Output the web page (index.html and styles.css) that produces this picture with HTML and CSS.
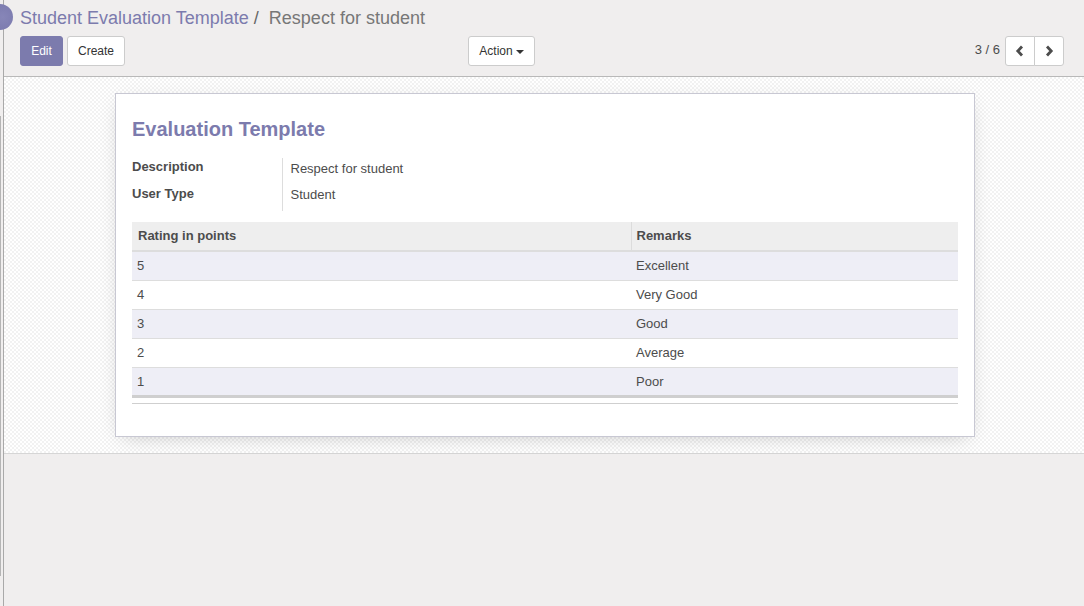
FILE: index.html
```html
<!DOCTYPE html>
<html>
<head>
<meta charset="utf-8">
<link rel="stylesheet" href="styles.css">
</head>
<body>
<div class="app">
  <div class="avatar"></div>
  <div class="rail"><div class="rail-mark"></div></div>
  <div class="main">
    <div class="control-panel">
      <div class="breadcrumb">
        <a class="crumb-link">Student Evaluation Template</a><span class="crumb-sep">/</span><span class="crumb-active">Respect for student</span>
      </div>
      <div class="cp-row">
        <div class="cp-buttons">
          <button class="btn btn-primary">Edit</button>
          <button class="btn">Create</button>
        </div>
        <div class="cp-sidebar">
          <button class="btn">Action <span class="caret"></span></button>
        </div>
        <div class="cp-pager">
          <span class="pager-value">3 / 6</span>
          <div class="btn-group">
            <button class="btn btn-icon" aria-label="Previous">
              <svg width="10" height="12" viewBox="0 0 10 12"><path d="M7 1.5 L2.8 6 L7 10.5" fill="none" stroke="#4c4c4c" stroke-width="2.8" stroke-linejoin="miter"/></svg>
            </button>
            <button class="btn btn-icon" aria-label="Next">
              <svg width="10" height="12" viewBox="0 0 10 12"><path d="M3 1.5 L7.2 6 L3 10.5" fill="none" stroke="#4c4c4c" stroke-width="2.8" stroke-linejoin="miter"/></svg>
            </button>
          </div>
        </div>
      </div>
    </div>
    <div class="form-view">
      <div class="sheet">
        <h1 class="title">Evaluation Template</h1>
        <table class="group">
          <tr><td class="label">Description</td><td class="value">Respect for student</td></tr>
          <tr><td class="label">User Type</td><td class="value">Student</td></tr>
        </table>
        <table class="list">
          <thead>
            <tr><th class="col-rating">Rating in points</th><th class="col-remarks">Remarks</th></tr>
          </thead>
          <tbody>
            <tr><td>5</td><td>Excellent</td></tr>
            <tr><td>4</td><td>Very Good</td></tr>
            <tr><td>3</td><td>Good</td></tr>
            <tr><td>2</td><td>Average</td></tr>
            <tr><td>1</td><td>Poor</td></tr>
          </tbody>
          <tfoot>
            <tr><td></td><td></td></tr>
          </tfoot>
        </table>
      </div>
    </div>
    <div class="rest"></div>
  </div>
</div>
</body>
</html>
```
FILE: styles.css
```css
* { box-sizing: border-box; }
html, body { margin: 0; padding: 0; }
body {
  font-family: "Liberation Sans", Arial, sans-serif;
  font-size: 13px;
  color: #4c4c4c;
  background: #f0eeee;
  width: 1084px;
  height: 606px;
  overflow: hidden;
}
.app {
  position: relative;
  display: flex;
  height: 606px;
}
.avatar {
  position: absolute;
  left: -13px;
  top: 4px;
  width: 26px;
  height: 26px;
  border-radius: 50%;
  background: radial-gradient(circle at 60% 50%, #8786b8, #7776ab);
  z-index: 2;
}
.rail {
  width: 4px;
  background: #f0eeee;
  border-right: 1px solid #a9a9a9;
  flex: none;
}
.rail-mark {
  margin-top: 116px;
  width: 1px;
  height: 460px;
  background: #b5b5b5;
}
.main {
  flex: 1;
  display: flex;
  flex-direction: column;
  min-width: 0;
}
.control-panel {
  height: 77px;
  border-bottom: 1px solid #b9b9b9;
  background: #f0eeee;
  padding: 5px 20px 0 16px;
}
.breadcrumb {
  font-size: 18px;
  line-height: 26px;
  white-space: nowrap;
}
.crumb-link { color: #7c7bad; }
.crumb-sep { color: #666; padding: 0 10px 0 5px; }
.crumb-active { color: #777; }
.cp-row {
  display: grid;
  grid-template-columns: 448px 1fr auto;
  margin-top: 5px;
  align-items: center;
}
.cp-buttons { display: flex; gap: 4px; }
.btn {
  height: 30px;
  padding: 0 10px;
  font-family: "Liberation Sans", Arial, sans-serif;
  font-size: 12px;
  color: #333;
  background: #fff;
  border: 1px solid #ccc;
  border-radius: 3px;
  display: inline-flex;
  align-items: center;
  justify-content: center;
}
.btn-primary {
  background: #7c7bad;
  border-color: #7c7bad;
  color: #fff;
  width: 43px;
}
.cp-buttons .btn:not(.btn-primary) { width: 58px; padding: 0; }
.cp-sidebar .btn { width: 67px; padding: 0; gap: 3px; }
.caret {
  display: inline-block;
  width: 0; height: 0;
  border-left: 4px solid transparent;
  border-right: 4px solid transparent;
  border-top: 4px solid #333;
  margin-top: 1px;
}
.cp-pager { display: flex; align-items: center; gap: 5px; }
.pager-value { font-size: 13px; color: #4c4c4c; margin-top: -4px; }
.btn-group { display: flex; }
.btn-icon { width: 30px; padding: 0; }
.btn-group .btn-icon:first-child { border-top-right-radius: 0; border-bottom-right-radius: 0; }
.btn-group .btn-icon:last-child { border-top-left-radius: 0; border-bottom-left-radius: 0; margin-left: -1px; }

.form-view {
  padding: 16px 0 16px 2px;
  border-bottom: 1px solid #d6d6d6;
  background-color: #fff;
  background-image: conic-gradient(#f2f2f2 0 25%, #fff 0 50%, #f2f2f2 0 75%, #fff 0);
  background-size: 4px 4px;
}
.sheet {
  width: 860px;
  margin: 0 auto;
  background: #fff;
  border: 1px solid #c8c8d3;
  box-shadow: 0 5px 20px -8px rgba(0,0,0,0.25);
  padding: 16px 16px 32px;
}
.title {
  margin: 0;
  font-size: 20px;
  line-height: 38px;
  font-weight: bold;
  color: #7c7bad;
}
.group {
  margin-top: 10px;
  border-collapse: collapse;
}
.group td { padding: 0; height: 27px; vertical-align: top; }
.group .label {
  width: 150px;
  font-weight: bold;
  line-height: 18px;
}
.group .value {
  border-left: 1px solid #ddd;
  padding-left: 8px;
  padding-top: 1px;
  line-height: 18px;
}
.group tr:first-child td { padding-top: 0; }
.group tr:first-child .value { padding-top: 2px; }
.group tr:last-child td { height: 26px; }

.list {
  width: 100%;
  margin-top: 11px;
  border-collapse: collapse;
  font-size: 13px;
}
.list th {
  background: #eee;
  text-align: left;
  font-weight: bold;
  height: 29px;
  padding: 0 6px 2px;
  border-bottom: 2px solid #ddd;
}
.list th.col-rating { width: 499px; }
.list th.col-remarks { border-left: 1px solid #dcdcdc; padding-left: 5px; }
.list tbody td {
  height: 29px;
  padding: 0 5px;
  border-top: 1px solid #ddd;
}
.list tbody tr:nth-child(odd) td { background: #eeeef6; }
.list tbody tr:first-child td { border-top: 0; }
.list tbody tr:last-child td { border-bottom: 3px solid #cfcfcf; }
.list tfoot td {
  height: 7px;
  padding: 0;
  border-bottom: 1px solid #cfcfcf;
}
.rest { flex: 1; background: #f0eeee; }
```
